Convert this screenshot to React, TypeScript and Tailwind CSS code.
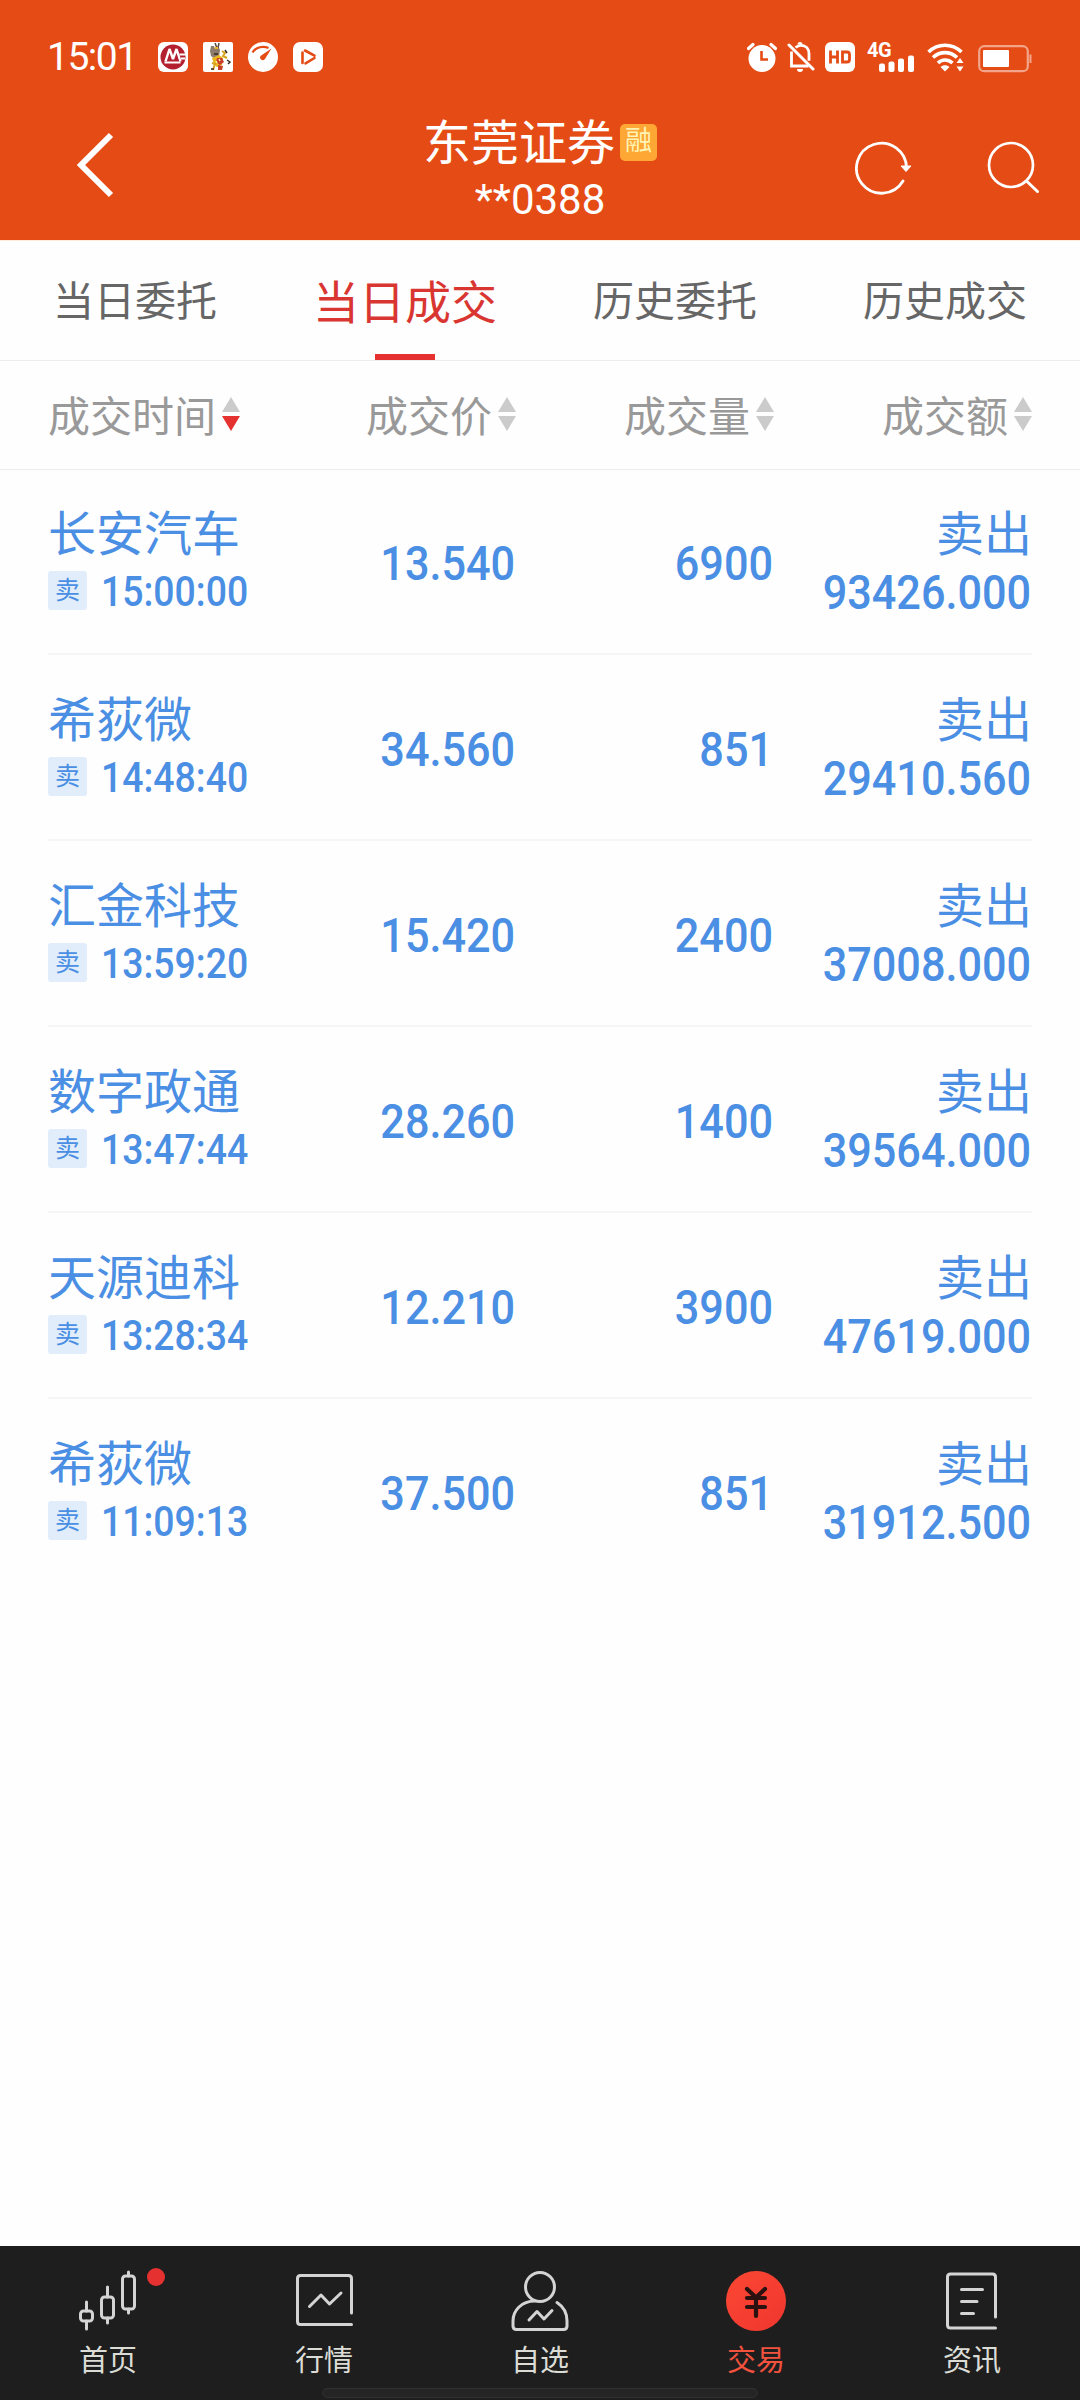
import type { ReactNode } from "react"
import clsx from "clsx"

type Trade = { name: string, time: string, price: string, volume: string, amount: string }

const TABS = ["当日委托", "当日成交", "历史委托", "历史成交"]

const TRADES: Trade[] = [
    { name: "长安汽车", time: "15:00:00", price: "13.540", volume: "6900", amount: "93426.000" },
    { name: "希荻微", time: "14:48:40", price: "34.560", volume: "851", amount: "29410.560" },
    { name: "汇金科技", time: "13:59:20", price: "15.420", volume: "2400", amount: "37008.000" },
    { name: "数字政通", time: "13:47:44", price: "28.260", volume: "1400", amount: "39564.000" },
    { name: "天源迪科", time: "13:28:34", price: "12.210", volume: "3900", amount: "47619.000" },
    { name: "希荻微", time: "11:09:13", price: "37.500", volume: "851", amount: "31912.500" },
]


function StatusBar() {
    return (
        <div className="flex h-[114px] items-center justify-between pl-[47px] pr-12 text-white">
            <div className="flex items-center">
                <span className="w-[111px] pt-px text-[39px] leading-none tracking-[-1.500px]">15:01</span>
                <svg width="30" height="30" viewBox="0 0 30 30">
                    <rect width="30" height="30" rx="6" fill="#fff" />
                    <circle cx="15" cy="15" r="12.500" fill="#b3202f" />
                    <path d="M7.500 19.500 11.500 7l3.500 10 3.500-10 4 12.500" fill="none" stroke="#fff" strokeWidth="2.400" strokeLinejoin="bevel" />
                    <path d="M6.500 20.500h16M21.500 12.500h8.500M23 16.500h4" stroke="#fff" strokeWidth="1.800" />
                </svg>
                <svg className="ml-[15px]" width="30" height="30" viewBox="0 0 30 30">
                    <rect width="30" height="30" rx="2" fill="#fff" />
                    <path d="M8 4h3l1 3 3-3 2 4-1 7-4 2-4-3-1-5z" fill="#8a7b6c" />
                    <path d="M12 1l2 5M16 1l-1 5" stroke="#5b4a40" strokeWidth="1.500" />
                    <path d="M12 5h3v2h-3zM9 16l7-3 4 3-1 7-5 2-3-3z" fill="#edb51c" />
                    <path d="M14 16h5l2 4-4 3-4-3zM15 23l5 1-1 4h-4z" fill="#c9402a" />
                    <path d="M9 21l3 1-2 6M19 9l3 2-2 3 4 2" stroke="#d8a320" strokeWidth="2" fill="none" />
                    <path d="M22 8l2 3M24 18l3 2-2 2M8 27h3M11 12h4" stroke="#33271f" strokeWidth="1.400" fill="none" />
                    <path d="M16 17l1 2M13 19l1 2" stroke="#fff4a0" strokeWidth="1.500" />
                </svg>
                <svg className="ml-[15px]" width="30" height="30" viewBox="0 0 30 30">
                    <circle cx="15" cy="15" r="15" fill="#fff" />
                    <path d="M4.500 10.500C8 5 15 3.500 20.500 6" fill="none" stroke="#e44b15" strokeWidth="2.300" />
                    <path d="M23.500 6.500 16.800 17.200a2.600 2.600 0 1 1-4-3.500z" fill="#e44b15" />
                </svg>
                <svg className="ml-[15px]" width="30" height="30" viewBox="0 0 30 30">
                    <rect width="30" height="30" rx="7" fill="#fff" />
                    <path d="M9.500 10.500v10.500M12 8.500l9.500 5.200M12.500 21.300l9-5.300" fill="none" stroke="#e44b15" strokeWidth="2.600" strokeLinecap="round" />
                </svg>
            </div>

            <div className="flex items-center">
                <svg width="30" height="30" viewBox="0 0 30 30">
                    <circle cx="15" cy="16.500" r="13.500" fill="#fff" />
                    <path d="M1.500 6.500 6 2.500M28.500 6.500 24 2.500" stroke="#fff" strokeWidth="3.200" strokeLinecap="round" />
                    <path d="M14.500 9v8.500h6.500" fill="none" stroke="#e44b15" strokeWidth="2.600" />
                </svg>
                <svg className="ml-[10px]" width="28" height="30" viewBox="0 0 28 30">
                    <path d="M8.500 5.500C11 3.500 13 3.300 14 3.300c5 0 8 3.700 8 8.500v7M4.500 9.500V24h17" fill="none" stroke="#fff" strokeWidth="2.800" />
                    <path d="M10.500 2.500a2.500 2.500 0 0 1 5 0zM10 27h6a3 3 0 0 1-6 0z" fill="#fff" />
                    <path d="M2 3l24 24" stroke="#fff" strokeWidth="3" strokeLinecap="round" />
                </svg>
                <svg className="ml-[10px]" width="30" height="30" viewBox="0 0 30 30">
                    <rect width="30" height="30" rx="6" fill="#fff" />
                    <path d="M5.500 8.500v13M12.500 8.500v13M5.500 15h7M17.500 10h4.500q2.500 0 2.500 2.500v5q0 2.500-2.500 2.500h-4.500z" fill="none" stroke="#e44b15" strokeWidth="2.800" />
                </svg>
                <div className="relative ml-3 h-[30px] w-[48px]">
                    <span className="absolute left-0 -top-px text-[20px] font-bold leading-[18px] tracking-[-0.5px]">4G</span>
                    <svg className="absolute bottom-0 left-3" width="36" height="17" viewBox="0 0 36 17">
                        <rect x="0" y="8.500" width="6" height="8.500" rx="2" fill="#fff" />
                        <rect x="9.500" y="6.500" width="6" height="10.500" rx="2" fill="#fff" />
                        <rect x="19" y="3.500" width="6" height="13.500" rx="2" fill="#fff" />
                        <rect x="29" y="0.500" width="6" height="16.500" rx="2" fill="#fff" />
                    </svg>
                </div>
                <svg className="ml-3" width="38" height="30" viewBox="0 0 38 30">
                    <path d="M1.500 10c9.500-9 23.500-9 33 0M6 15.500c7-6.500 17-6.500 24 0M11 21c4-4 10-4 14.500 0" fill="none" stroke="#fff" strokeWidth="3.600" />
                    <path d="M13.500 25c3-2.500 6-2.500 9 0L18 29.500zM33 16l3.500 5h-7zM33 29.500l3.500-5h-7z" fill="#fff" />
                </svg>
                <svg className="ml-[13px] mt-1" width="54" height="28" viewBox="0 0 54 28">
                    <rect x="1.200" y="1.200" width="48.600" height="25" rx="5" fill="none" stroke="#fff" strokeOpacity="0.5" strokeWidth="2.200" />
                    <rect x="5" y="5" width="26" height="17" rx="1" fill="#fff" />
                    <path d="M52.500 9.500v8.500" stroke="#fff" strokeOpacity="0.5" strokeWidth="2" />
                </svg>
            </div>
        </div>
    )
}

function Header() {
    return (
        <header className="h-[240px] bg-[#e54b15]">
            <StatusBar />
            <div className="grid h-[126px] grid-cols-3 items-start text-white">
                <svg className="ml-[72px] mt-[15px]" width="48" height="72" viewBox="0 0 48 72">
                    <path d="M39 6 9 36l30 30" fill="none" stroke="#fff" strokeWidth="6" />
                </svg>
                <div className="flex flex-col items-center pt-0.5">
                    <div className="flex items-center">
                        <h1 className="text-[48px] leading-[56px]">东莞证券</h1>
                        <span className="mb-[3px] ml-[5px] flex h-[37px] w-[37px] items-center justify-center rounded-[5px] bg-[#ffa735] pb-0.5 text-[27px] leading-none text-[#fff3b4]">融</span>
                    </div>
                    <span className="mt-[3px] text-[42px] leading-[50px]">**0388</span>
                </div>
                <div className="flex justify-end pr-[39px]">
                    <svg className="mt-6" width="58" height="58" viewBox="0 0 58 58">
                        <path d="M51.500 31A25 25 0 1 0 48 43" fill="none" stroke="#fff" strokeWidth="2.800" strokeLinecap="round" />
                        <path d="M46 28h10l-5 5.500z" fill="#fff" stroke="#fff" strokeWidth="1" strokeLinejoin="round" />
                    </svg>
                    <svg className="ml-[70px] mt-6" width="58" height="58" viewBox="0 0 58 58">
                        <circle cx="28" cy="27" r="22" fill="none" stroke="#fff" strokeWidth="2.700" />
                        <path d="M43.500 43 54.500 53.500" stroke="#fff" strokeWidth="3" strokeLinecap="round" />
                    </svg>
                </div>
            </div>
        </header>
    )
}

function SortHead({ label, active = false } : { label: string, active?: boolean }) {
    return (
        <div className="flex items-center justify-end gap-1.5">
            <span className="whitespace-nowrap pt-1.5 leading-[60px]">{label}</span>
            <svg className="mb-0.5 shrink-0" width="18" height="34" viewBox="0 0 18 34">
                <path d="M9 0l9 15H0z" fill="#cbcbcb" />
                <path d="M9 34l9-15H0z" fill={active ? "#e5312f" : "#cbcbcb"} />
            </svg>
        </div>
    )
}

function TradeRow({ trade } : { trade: Trade }) {
    return (
        <div className="grid h-[186px] grid-cols-[210px_258px_257px_259px] border-b-2 border-[#f6f6f6] text-[48px] text-[#4a8fe3] last:border-0">
            <div className="pt-[37px]">
                <div className="text-[48px] leading-[58px]">{trade.name}</div>
                <div className="mt-[5px] flex items-center">
                    <span className="flex h-[39px] w-[39px] shrink-0 items-center justify-center rounded-[3px] bg-[#e1edfa] text-[25px] leading-none">卖</span>
                    <span className="ml-3.5 mt-1 origin-left scale-x-[0.89] whitespace-nowrap text-[42px] font-medium leading-[38px]">{trade.time}</span>
                </div>
            </div>
            <div className="origin-right scale-x-[0.9] pr-px pt-[67px] text-right font-medium leading-[56px]">{trade.price}</div>
            <div className="origin-right scale-x-[0.9] pt-[67px] text-right font-medium leading-[56px]">{trade.volume}</div>
            <div className="pt-[37px] text-right">
                <div className="text-[48px] leading-[58px]">卖出</div>
                <div className="mt-px origin-right scale-x-[0.9] pr-px font-medium leading-[56px]">{trade.amount}</div>
            </div>
        </div>
    )
}

function NavItem({ label, active = false, badge = false, children } : { label: string, active?: boolean, badge?: boolean, children: ReactNode }) {
    return (
        <div className={clsx("relative flex flex-col items-center pt-[23px]", active ? "text-[#f2523e]" : "text-[#dcdcd6]")}>
            <svg width="64" height="64" viewBox="0 0 64 64" fill="none" stroke="#d4d4d4" strokeWidth="3" strokeLinecap="round" strokeLinejoin="round">
                {children}
            </svg>
            <span className="mt-[9px] text-[29px] leading-[38px]">{label}</span>
            {badge && <span className="absolute left-[147px] top-[22px] h-[18px] w-[18px] rounded-full bg-[#e63131]"></span>}
        </div>
    )
}

function BottomNav() {
    return (
        <nav className="relative grid h-[154px] grid-cols-5 bg-[#1e1e1e]">
            <NavItem label="首页" badge>
                <rect x="4.500" y="42" width="12" height="10" rx="3" />
                <rect x="25.500" y="28" width="12" height="21" rx="3" />
                <rect x="46.500" y="7" width="12" height="33" rx="3" />
                <path d="M10.500 33v9M10.500 52v8M31.500 18v10M31.500 49v5M52.500 3v4M52.500 40v4" />
            </NavItem>
            <NavItem label="行情">
                <path d="M59.500 44V9.500q0-3-3-3h-48q-3 0-3 3v43q0 3 3 3h51" />
                <path d="M17.500 37.500 29 26l8.500 9L49 24" />
            </NavItem>
            <NavItem label="自选">
                <circle cx="32" cy="18" r="14.500" />
                <path d="M27 32C13 32 5 42 5 52v5q0 3.500 3.500 3.500h47q3.500 0 3.500-3.500v-5c0-7-3-14-10-18.500" />
                <path d="M21 51l8-8.500 7 7.500 8-8.500" />
            </NavItem>
            <NavItem label="交易" active>
                <defs>
                    <linearGradient id="coin" x1="0" y1="0" x2="1" y2="1">
                        <stop stopColor="#fb4733" />
                        <stop offset="1" stopColor="#f0362f" />
                    </linearGradient>
                </defs>
                <circle cx="32" cy="32" r="30" fill="url(#coin)" stroke="none" />
                <path d="M23 20l9 8.500L41 20M23 29h18M23 38h18M32 29v18" stroke="#2b1211" strokeWidth="4.200" />
            </NavItem>
            <NavItem label="资讯">
                <path d="M55.500 48V8q0-3-3-3H10.500q-3 0-3 3v48q0 3 3 3h45" />
                <path d="M21.500 20.500h21M21.500 32.500h15.500M21.500 44.500h12" />
            </NavItem>
            <div className="absolute left-[322px] top-[142px] h-2.5 w-[436px] rounded-full border border-[#303030] bg-[#252525]"></div>
        </nav>
    )
}


export default function App() {
    return (
        <div className="flex h-[2400px] w-[1080px] flex-col overflow-hidden bg-[#fefefe] font-['Roboto','Noto_Sans_CJK_SC',sans-serif]">
            <Header />

            <div className="grid h-[121px] grid-cols-4 border-b border-t border-b-[#ececec] border-t-[#ffeadb]">
                {TABS.map((tab, index) => (
                    <div key={tab} className={clsx("relative flex items-start justify-center", index === 1 ? "pt-[33px] text-[46px] text-[#d93632]" : "pt-8 text-[41px] text-[#666]")}>
                        <span className="leading-[58px]">{tab}</span>
                        {index === 1 && <span className="absolute bottom-0 h-1.5 w-[60px] bg-[#e5312f]"></span>}
                    </div>
                ))}
            </div>

            <div className="grid h-[109px] shrink-0 grid-cols-[192px_276px_258px_258px] border-b border-[#ececec] px-12 text-[42px] text-[#999]">
                <SortHead label="成交时间" active />
                <SortHead label="成交价" />
                <SortHead label="成交量" />
                <SortHead label="成交额" />
            </div>

            <div className="-mt-px flex-1 px-12">
                {TRADES.map((trade) => (
                    <TradeRow key={trade.time} trade={trade} />
                ))}
            </div>

            <BottomNav />
        </div>
    )
}
